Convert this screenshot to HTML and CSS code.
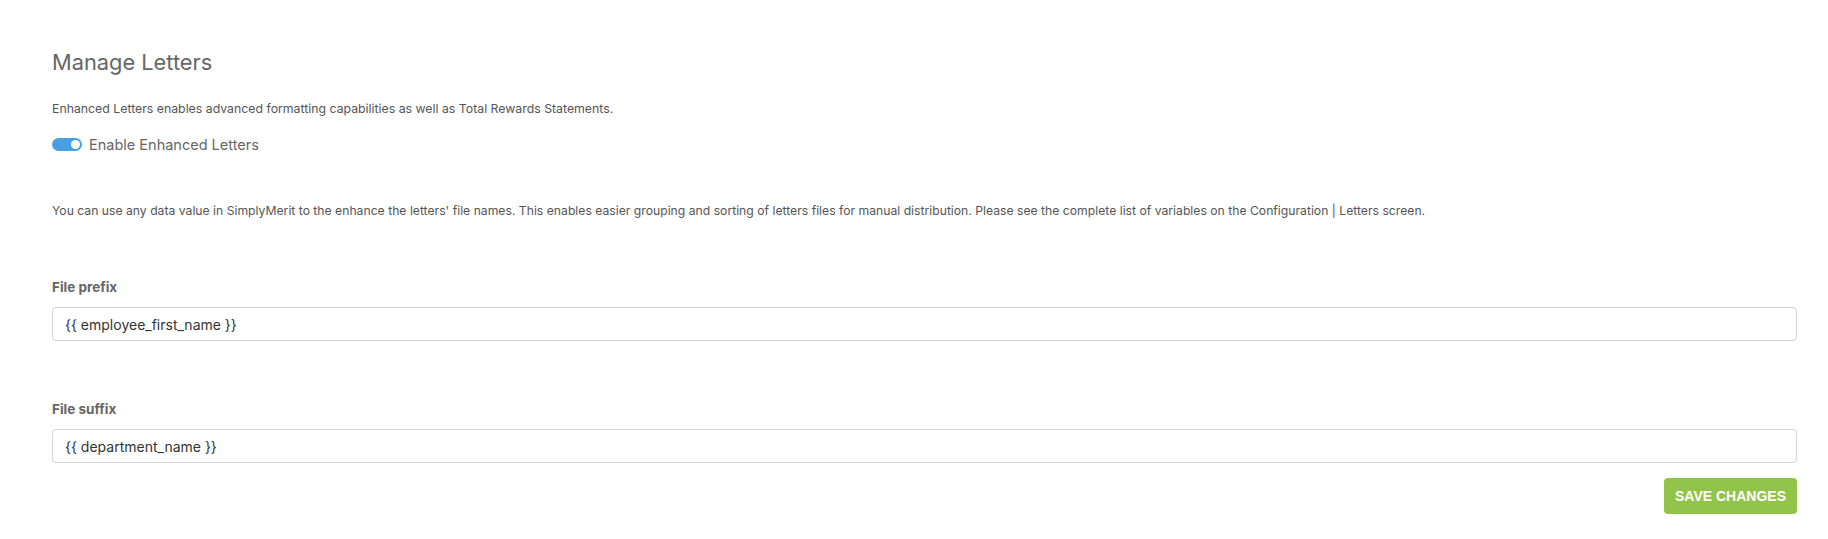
FILE: index.html
```html
<!DOCTYPE html>
<html>
<head>
<meta charset="utf-8">
<link rel="stylesheet" href="styles.css">
</head>
<body>
<div class="page">
  <h1 class="title">Manage Letters</h1>
  <p class="desc">Enhanced Letters enables advanced formatting capabilities as well as Total Rewards Statements.</p>
  <div class="toggle-row">
    <span class="toggle"><span class="knob"></span></span>
    <span class="toggle-label">Enable Enhanced Letters</span>
  </div>
  <p class="desc para2">You can use any data value in SimplyMerit to the enhance the letters' file names. This enables easier grouping and sorting of letters files for manual distribution. Please see the complete list of variables on the Configuration | Letters screen.</p>
  <div class="field field1">
    <label class="label">File prefix</label>
    <div class="input">{{ employee_first_name }}</div>
  </div>
  <div class="field field2">
    <label class="label">File suffix</label>
    <div class="input">{{ department_name }}</div>
  </div>
  <div class="actions">
    <button class="btn">SAVE CHANGES</button>
  </div>
</div>
</body>
</html>
```
FILE: styles.css
```css
html, body {
  margin: 0;
  padding: 0;
  background: #fff;
}
.page {
  padding: 0 31px 0 52px;
  font-family: Inter, "Liberation Sans", sans-serif;
}
.title {
  margin: 50px 0 0;
  font-size: 21.8px;
  line-height: 25px;
  font-weight: 400;
  color: #666;
}
.desc {
  margin: 26px 0 0;
  font-size: 12.3px;
  line-height: 16px;
  color: #555;
}
.toggle-row {
  margin-top: 19px;
  height: 16px;
  display: flex;
  align-items: center;
  gap: 7px;
}
.toggle {
  width: 30px;
  height: 13px;
  border-radius: 7px;
  background: #4a9fe0;
  display: flex;
  align-items: center;
  justify-content: flex-end;
  padding-right: 2px;
  box-sizing: border-box;
}
.knob {
  width: 9px;
  height: 9px;
  border-radius: 50%;
  background: #fff;
}
.toggle-label {
  font-size: 14.5px;
  color: #666;
}
.para2 {
  margin-top: 51px;
  font-size: 12.2px;
}
.field1 {
  margin-top: 60px;
}
.field2 {
  margin-top: 60px;
}
.label {
  display: block;
  font-size: 13.5px;
  line-height: 16px;
  font-weight: 700;
  color: #666;
  margin-bottom: 12px;
}
.input {
  height: 34px;
  box-sizing: border-box;
  border: 1px solid #d2d4d9;
  border-radius: 4px;
  padding: 0 12px;
  display: flex;
  align-items: center;
  font-size: 14px;
  color: #333;
}
.actions {
  margin-top: 15px;
  display: flex;
  justify-content: flex-end;
}
.btn {
  height: 36px;
  width: 133px;
  border: none;
  border-radius: 4px;
  background: #93c44a;
  color: #fff;
  font-family: "Liberation Sans", Arial, sans-serif;
  font-weight: 700;
  font-size: 14px;
  padding: 0;
}
```
